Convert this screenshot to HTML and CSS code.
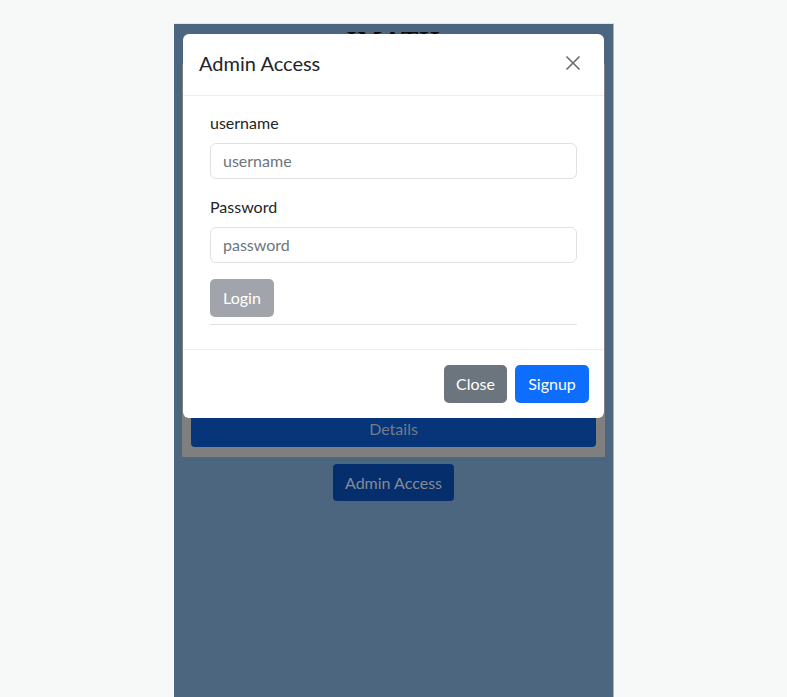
FILE: index.html
```html
<!DOCTYPE html>
<html lang="en">
<head>
<meta charset="utf-8">
<title>Admin Access</title>
<link rel="stylesheet" href="styles.css">
</head>
<body>
<div class="frame">
  <div class="app">
    <h1 class="brand">IMATH</h1>
    <div class="card">
      <div class="card-top"></div>
      <button class="btn-details" type="button">Details</button>
    </div>
    <div class="admin-row">
      <button class="btn-admin" type="button">Admin Access</button>
    </div>
  </div>

  <div class="modal">
    <div class="modal-header">
      <h5 class="modal-title">Admin Access</h5>
      <button class="btn-close" type="button" aria-label="Close">
        <svg width="16" height="16" viewBox="0 0 16 16"><path d="M1.5 1.5 L14.5 14.5 M14.5 1.5 L1.5 14.5" stroke="#6b6b6b" stroke-width="1.6" fill="none"/></svg>
      </button>
    </div>
    <div class="modal-body">
      <form class="form">
        <label class="label" for="u">username</label>
        <input class="input" id="u" type="text" placeholder="username">
        <label class="label label-2" for="p">Password</label>
        <input class="input" id="p" type="password" placeholder="password">
        <button class="btn btn-login" type="button">Login</button>
        <hr class="rule">
      </form>
    </div>
    <div class="modal-footer">
      <button class="btn btn-secondary" type="button">Close</button>
      <button class="btn btn-primary" type="button">Signup</button>
    </div>
  </div>
</div>
</body>
</html>
```

FILE: styles.css
```css
* { box-sizing: border-box; }
html, body {
  margin: 0;
  padding: 0;
  height: 100%;
}
body {
  background: #f7f8f8;
  font-family: "Lato", "Noto Sans", sans-serif;
  font-size: 16px;
  color: #212529;
  overflow: hidden;
}
.frame {
  position: relative;
  height: 100%;
  padding-top: 23px;
}
.app {
  margin-left: 174px;
  width: 440px;
  height: 674px;
  border-top: 1px solid #e3e5e6;
  border-right: 1px solid #8db6e6;
  background: #4c6680;
  display: flex;
  flex-direction: column;
  align-items: stretch;
}
.brand {
  margin: 0;
  height: 40px;
  text-align: center;
  font-family: "Liberation Serif", serif;
  font-size: 26px;
  line-height: 26px;
  padding-top: 4px;
  color: #0a0a0a;
  letter-spacing: 1px;
}
.card {
  margin: 0 8px;
  background: #7f7f7f;
  padding: 0 9px 10px 9px;
  display: flex;
  flex-direction: column;
}
.card-top {
  height: 347px;
}
.btn-details {
  height: 36px;
  padding-bottom: 2px;
  border: 0;
  border-radius: 4px;
  background: #06357a;
  color: #757c88;
  font-family: inherit;
  font-size: 16px;
}
.admin-row {
  display: flex;
  justify-content: center;
  padding-top: 7px;
}
.btn-admin {
  height: 37px;
  padding: 0 12px;
  border: 0;
  border-radius: 4px;
  background: #052e6d;
  color: #858b94;
  font-family: inherit;
  font-size: 16px;
}

.modal {
  position: absolute;
  left: 183px;
  top: 34px;
  width: 421px;
  background: #fff;
  border-radius: 6px;
  display: flex;
  flex-direction: column;
}
.modal-header {
  height: 62px;
  padding: 0 16px 3px;
  display: flex;
  align-items: center;
  justify-content: space-between;
  border-bottom: 1px solid #eeeff1;
}
.modal-title {
  margin: 0;
  font-size: 20px;
  font-weight: 400;
  line-height: 30px;
  color: #212529;
}
.btn-close {
  border: 0;
  background: transparent;
  padding: 0;
  margin-right: 7px;
  width: 16px;
  height: 16px;
  display: flex;
}
.modal-body {
  padding: 16px;
}
.form {
  padding: 0 11px;
  display: flex;
  flex-direction: column;
  align-items: flex-start;
}
.label {
  line-height: 22px;
  margin-bottom: 9px;
}
.label-2 {
  margin-top: 17px;
}
.input {
  width: 100%;
  height: 36px;
  border: 1px solid #dee2e6;
  border-radius: 6px;
  padding: 5px 12px 7px;
  font-family: inherit;
  font-size: 16px;
  color: #212529;
}
.input::placeholder { color: #6c757d; }
.btn {
  height: 38px;
  padding: 0 12px 1px;
  border: 0;
  border-radius: 5px;
  font-family: inherit;
  font-size: 16px;
  line-height: 24px;
  color: #fff;
}
.btn-login {
  margin-top: 16px;
  background: #a1a5ab;
  width: 64px;
}
.rule {
  align-self: stretch;
  border: 0;
  border-top: 1px solid #dee2e6;
  margin: 7px 0 8px;
}
.modal-footer {
  border-top: 1px solid #eeeff1;
  padding: 15px 15px 15px 16px;
  display: flex;
  justify-content: flex-end;
  gap: 8px;
}
.btn-secondary { background: #6c757d; width: 63px; }
.btn-primary { background: #0d6efd; width: 74px; }
```
